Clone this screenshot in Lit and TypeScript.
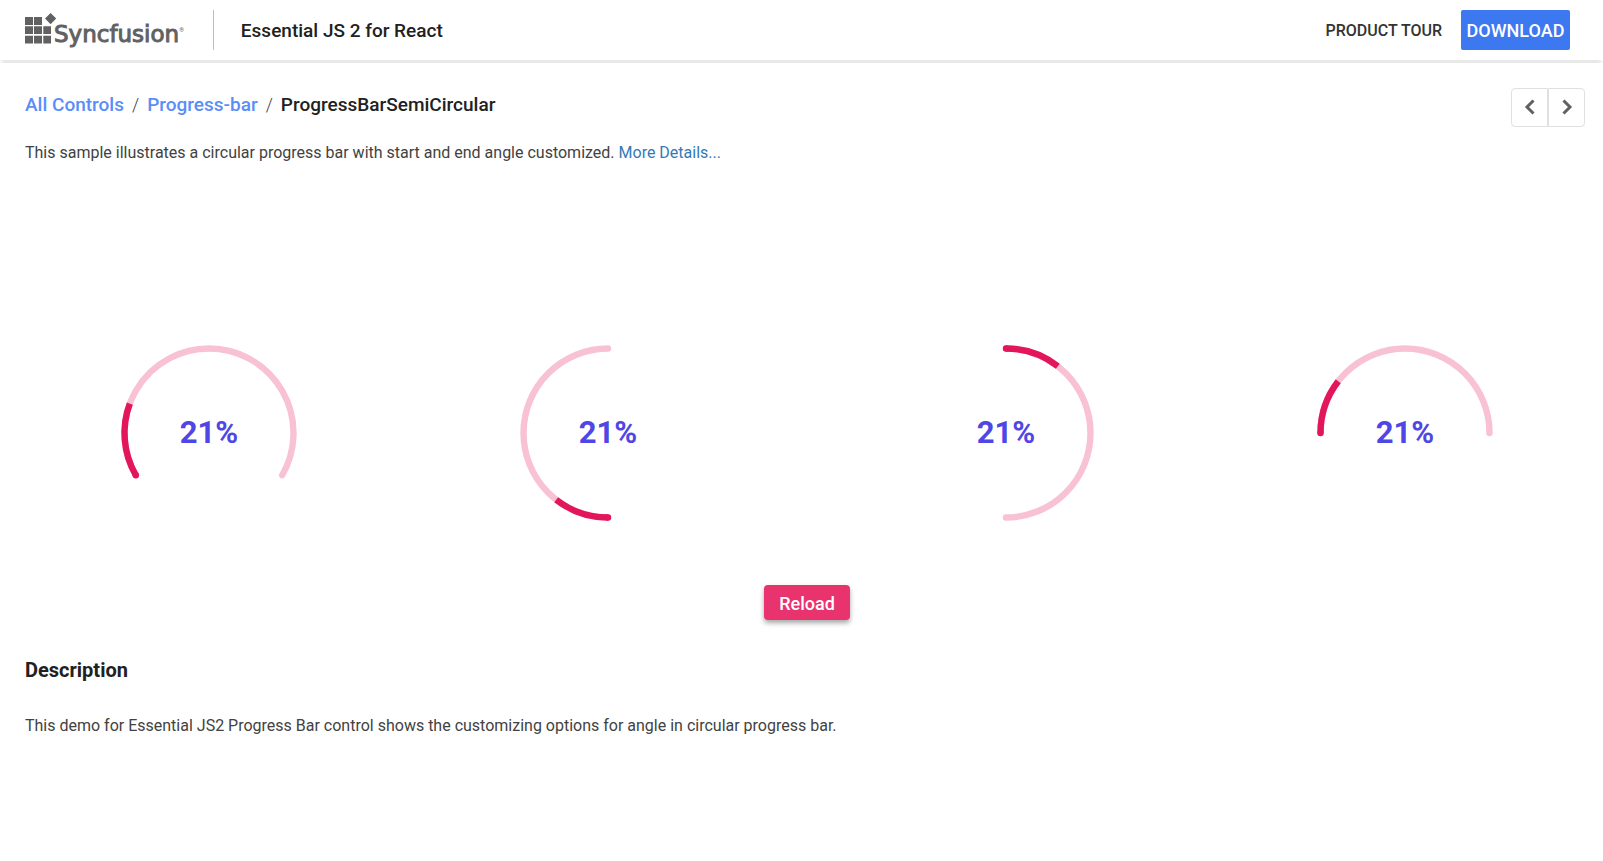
import { LitElement, html, css, svg } from "lit";
import { customElement, property, state } from "lit/decorators.js";

const RADIUS = 84.5;
const CENTER = 100;

function pointAt(angle: number): [number, number] {
  const rad = ((angle - 90) * Math.PI) / 180;
  return [CENTER + RADIUS * Math.cos(rad), CENTER + RADIUS * Math.sin(rad)];
}

function arcPath(start: number, sweep: number): string {
  const [x1, y1] = pointAt(start);
  const [x2, y2] = pointAt(start + sweep);
  return `M${x1} ${y1}A${RADIUS} ${RADIUS} 0 ${sweep > 180 ? 1 : 0} 1 ${x2} ${y2}`;
}

@customElement("semi-gauge")
export class SemiGauge extends LitElement {
  @property({ type: Number }) start = 0;
  @property({ type: Number }) sweep = 180;
  @property({ type: Number }) value = 0;

  static styles = css`
    :host { display: flex; justify-content: center; }
    .gauge { display: block; width: 200px; height: 200px; overflow: visible; }
    .arc { fill: none; stroke-width: 6.4; }
    .round { stroke-linecap: round; }
    .track { stroke: #f8c1d4; }
    .progress { stroke: #e3165b; }
    .label {
      fill: #4f46e5;
      font-family: Roboto, sans-serif;
      font-size: 31px;
      font-weight: 700;
      text-anchor: middle;
    }
  `;

  render() {
    const [sx, sy] = pointAt(this.start);
    return html`
      <svg class="gauge" viewBox="0 0 200 200" role="progressbar"
        aria-label="Progress" aria-valuemin="0" aria-valuemax="100" aria-valuenow=${this.value}>
        ${svg`
          <path class="arc round track" d=${arcPath(this.start, this.sweep)}></path>
          <path class="arc progress" d=${arcPath(this.start, (this.sweep * this.value) / 100)}></path>
          <path class="arc round progress" d=${`M${sx} ${sy}h0.01`}></path>
          <text class="label" x="100" y="110">${this.value}%</text>
        `}
      </svg>
    `;
  }
}

@customElement("app-root")
export class AppRoot extends LitElement {
  @state() private value = 21;

  private gauges = [
    { start: 240, sweep: 240 },
    { start: 180, sweep: 180 },
    { start: 0, sweep: 180 },
    { start: 270, sweep: 180 },
  ];

  static styles = css`
    :host {
      display: block;
      font-family: Roboto, sans-serif;
      font-size: 16px;
      line-height: 24px;
      color: #424242;
    }
    * { box-sizing: border-box; }
    a { text-decoration: none; }
    h1, h2, p, ol { margin: 0; padding: 0; }

    .header {
      display: flex;
      align-items: center;
      height: 60px;
      padding: 0 33px 0 25px;
    }
    .header-edge {
      height: 3px;
      background: linear-gradient(to right, #fafafa, #e8e8e8 5px, #e8e8e8 calc(100% - 5px), #fafafa);
    }
    .logo { display: flex; align-items: center; height: 40px; color: #616161; }
    .logo-mark { display: block; width: 29px; height: 40px; }
    .logo-name {
      font-family: "DejaVu Sans", sans-serif;
      font-size: 23px;
      -webkit-text-stroke: 1px #616161;
      padding-top: 8px;
    }
    .logo-reg { font-family: Roboto, sans-serif; font-size: 6px; align-self: flex-start; padding-top: 8px; }
    .product {
      flex: 1;
      margin-left: 29px;
      padding-left: 27px;
      border-left: 1px solid #bdbdbd;
      font-size: 19px;
      font-weight: 500;
      line-height: 42px;
      height: 40px;
      color: #212121;
    }
    .tour { font-weight: 500; line-height: 42px; height: 40px; color: #333; margin-right: 19px; }
    .download {
      width: 109px;
      height: 40px;
      border-radius: 2px;
      background: #3c78ef;
      color: #fff;
      font-size: 18px;
      font-weight: 500;
      line-height: 42px;
      text-align: center;
    }

    .content { padding: 25px 14px 40px 25px; }
    .top { display: flex; justify-content: space-between; align-items: flex-start; }
    .crumbs {
      display: flex;
      list-style: none;
      padding-top: 5px;
      font-size: 19px;
      font-weight: 500;
      color: #212121;
    }
    .crumbs a { color: #5a8df8; }
    .slash { padding: 0 8px; font-size: 18px; font-weight: 300; color: #424242; }
    .pager { display: flex; margin-right: 4px; }
    .pager button {
      width: 37px;
      height: 39px;
      padding: 0;
      border: 1px solid #e0e0e0;
      background: #fff;
      display: flex;
      align-items: center;
      justify-content: center;
    }
    .pager .prev { border-radius: 4px 0 0 4px; }
    .pager .next { border-radius: 0 4px 4px 0; }
    .chevron { width: 14px; height: 18px; fill: none; stroke: #616161; stroke-width: 3; }
    .intro { padding-top: 14px; }
    .intro a { color: #337ab7; }

    .gauges {
      display: grid;
      grid-template-columns: repeat(4, 1fr);
      margin: 168px -15px 0;
    }
    .actions { display: flex; justify-content: center; padding-top: 52px; }
    .reload {
      width: 86px;
      height: 35px;
      border: 0;
      border-radius: 4px;
      background: #e8336f;
      color: #fff;
      font: 500 18px/36px Roboto, sans-serif;
      padding: 1px 0 0;
      box-shadow: 0 3px 5px rgba(0, 0, 0, 0.35);
    }
    .heading { padding-top: 38px; font-size: 20px; font-weight: 700; color: #212121; }
    .about { padding-top: 32px; }
  `;

  private reload() {
    this.value = 0;
    requestAnimationFrame(() => (this.value = 21));
  }

  render() {
    return html`
      <header class="header">
        <div class="logo">
          <svg class="logo-mark" viewBox="0 0 29 40" overflow="visible" aria-hidden="true">
            <g fill="#616161">
              <path d="M0 7h8v8H0zM9 7h8v8H9zM0 16.3h8v7.8H0zM9 16.3h8v7.8H9zM18.3 16.3H26v7.8h-7.7zM0 25.8h8v7.7H0zM9 25.8h8v7.7H9zM18.3 25.8H26v7.7h-7.7z"></path>
              <path d="M25.6 3l5.6 5.6-5.6 5.6L20 8.600z"></path>
            </g>
          </svg>
          <span class="logo-name">Syncfusion</span><span class="logo-reg">®</span>
        </div>
        <div class="product">Essential JS 2 for React</div>
        <a class="tour" href="#tour">PRODUCT TOUR</a>
        <a class="download" href="#download">DOWNLOAD</a>
      </header>
      <div class="header-edge"></div>
      <main class="content">
        <div class="top">
          <ol class="crumbs">
            <li><a href="#all">All Controls</a></li>
            <li class="slash">/</li>
            <li><a href="#progress-bar">Progress-bar</a></li>
            <li class="slash">/</li>
            <li>ProgressBarSemiCircular</li>
          </ol>
          <div class="pager">
            <button class="prev" aria-label="Previous sample">
              <svg class="chevron" viewBox="0 0 14 18"><path d="M10.500 1.500L4 8l6.500 6.500"></path></svg>
            </button>
            <button class="next" aria-label="Next sample">
              <svg class="chevron" viewBox="0 0 14 18"><path d="M3.500 1.500L10 8l-6.500 6.500"></path></svg>
            </button>
          </div>
        </div>
        <p class="intro">
          This sample illustrates a circular progress bar with start and end angle customized.
          <a href="#details">More Details...</a>
        </p>
        <div class="gauges">
          ${this.gauges.map(
            (g) => html`<semi-gauge .start=${g.start} .sweep=${g.sweep} .value=${this.value}></semi-gauge>`
          )}
        </div>
        <div class="actions">
          <button class="reload" @click=${this.reload}>Reload</button>
        </div>
        <h2 class="heading">Description</h2>
        <p class="about">
          This demo for Essential JS2 Progress Bar control shows the customizing options for angle in circular progress bar.
        </p>
      </main>
    `;
  }
}
